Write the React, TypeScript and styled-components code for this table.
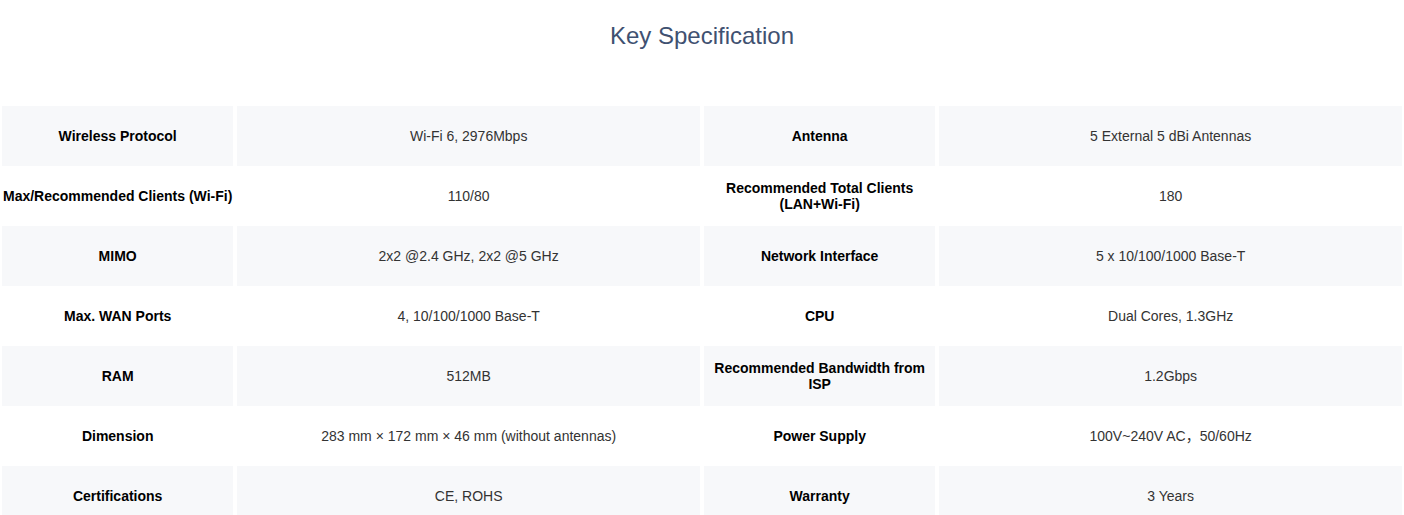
import styled, { createGlobalStyle } from "styled-components";

const GlobalStyle = createGlobalStyle`
    html {
        overflow: hidden;
    }
    body {
        margin: 0;
        background: #ffffff;
        font-family: "Liberation Sans", Arial, "Noto Sans CJK SC", sans-serif;
    }
`;

const Section = styled.section`
    padding: 22px 2px 0;
`;

const Title = styled.h2`
    margin: 0 0 56px;
    font-size: 24px;
    line-height: 28px;
    font-weight: normal;
    text-align: center;
    color: #3f5171;
`;

const SpecTable = styled.div`
    display: flex;
    flex-direction: column;
`;

const Row = styled.div`
    display: grid;
    grid-template-columns: 1fr 2fr 1fr 2fr;
    column-gap: 4px;
    height: 60px;
`;

const Cell = styled.div<{ $shaded: boolean; $label?: boolean }>`
    display: flex;
    align-items: center;
    justify-content: center;
    text-align: center;
    background: ${(p) => (p.$shaded ? "#f7f8fa" : "#ffffff")};
    font-size: 14px;
    line-height: 16px;
    font-weight: ${(p) => (p.$label ? "bold" : "normal")};
    color: ${(p) => (p.$label ? "#000000" : "#333333")};
`;

const specs: [string, string, string, string][] = [
    ["Wireless Protocol", "Wi-Fi 6, 2976Mbps", "Antenna", "5 External 5 dBi Antennas"],
    ["Max/Recommended Clients (Wi-Fi)", "110/80", "Recommended Total Clients (LAN+Wi-Fi)", "180"],
    ["MIMO", "2x2 @2.4 GHz, 2x2 @5 GHz", "Network Interface", "5 x 10/100/1000 Base-T"],
    ["Max. WAN Ports", "4, 10/100/1000 Base-T", "CPU", "Dual Cores, 1.3GHz"],
    ["RAM", "512MB", "Recommended Bandwidth from ISP", "1.2Gbps"],
    ["Dimension", "283 mm × 172 mm × 46 mm (without antennas)", "Power Supply", "100V~240V AC，50/60Hz"],
    ["Certifications", "CE, ROHS", "Warranty", "3 Years"],
];

export default function App() {
    return (
        <>
            <GlobalStyle />
            <Section>
                <Title>Key Specification</Title>
                <SpecTable>
                    {specs.map((row, i) => {
                        const shaded = i % 2 === 0;
                        return (
                            <Row key={row[0]}>
                                <Cell $shaded={shaded} $label>{row[0]}</Cell>
                                <Cell $shaded={shaded}>{row[1]}</Cell>
                                <Cell $shaded={shaded} $label>{row[2]}</Cell>
                                <Cell $shaded={shaded}>{row[3]}</Cell>
                            </Row>
                        );
                    })}
                </SpecTable>
            </Section>
        </>
    );
}
